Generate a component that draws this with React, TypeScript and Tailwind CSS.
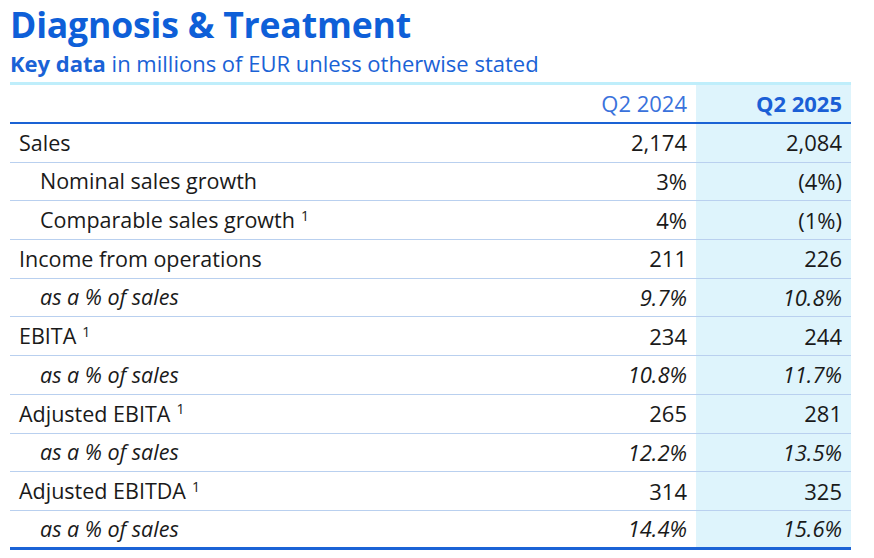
const rows: { label: string; a: string; b: string; indent?: boolean; italic?: boolean; note?: boolean }[] = [
  { label: "Sales", a: "2,174", b: "2,084" },
  { label: "Nominal sales growth", a: "3%", b: "(4%)", indent: true },
  { label: "Comparable sales growth", a: "4%", b: "(1%)", indent: true, note: true },
  { label: "Income from operations", a: "211", b: "226" },
  { label: "as a % of sales", a: "9.7%", b: "10.8%", indent: true, italic: true },
  { label: "EBITA", a: "234", b: "244", note: true },
  { label: "as a % of sales", a: "10.8%", b: "11.7%", indent: true, italic: true },
  { label: "Adjusted EBITA", a: "265", b: "281", note: true },
  { label: "as a % of sales", a: "12.2%", b: "13.5%", indent: true, italic: true },
  { label: "Adjusted EBITDA", a: "314", b: "325", note: true },
  { label: "as a % of sales", a: "14.4%", b: "15.6%", indent: true, italic: true },
];

export default function App() {
  return (
    <div className="h-[558px] w-[874px] bg-white pl-[10px] pr-[23px] font-['Open_Sans',sans-serif] text-[#1a1a1a]">
      <h1 className="pt-[1px] text-[35.6px] leading-[46px] font-bold tracking-[-0.2px] text-[#0e5fd8]">Diagnosis &amp; Treatment</h1>
      <p className="text-[22px] leading-[33px] text-[#1a62d6]">
        <span className="font-bold">Key data</span> in millions of EUR unless otherwise stated
      </p>

      <div className="mt-[2px] border-t-[3px] border-[#bfeefb]">
        {/* Header */}
        <div className="grid h-[39px] grid-cols-[1fr_160px_155px] border-b-2 border-[#1a62d4] text-[22px]">
          <div />
          <div className="flex items-center justify-end pr-[9px] text-[#3a72dc]">Q2 2024</div>
          <div className="flex items-center justify-end bg-[#def4fc] pr-[9px] font-bold text-[#1a5fd6]">Q2 2025</div>
        </div>

        {rows.map((r, i) => {
          const last = i === rows.length - 1;
          return (
            <div
              key={i}
              className={
                "grid h-[38.7px] grid-cols-[1fr_160px_155px] text-[22px] " +
                (last ? "border-b-[3px] border-[#1b63d6]" : "border-b-[1.5px] border-[#b9d0ef]") +
                (r.italic ? " italic" : "")
              }
            >
              <div className={"flex items-center text-[21.5px] " + (r.indent ? "pl-[30px]" : "pl-[9px]")}>
                {r.label}
                {r.note && <span className="ml-[6px] -mt-[10px] text-[14px] not-italic">1</span>}
              </div>
              <div className="flex items-center justify-end pr-[9px]">{r.a}</div>
              <div className="flex items-center justify-end bg-[#def4fc] pr-[9px]">{r.b}</div>
            </div>
          );
        })}
      </div>
    </div>
  );
}
